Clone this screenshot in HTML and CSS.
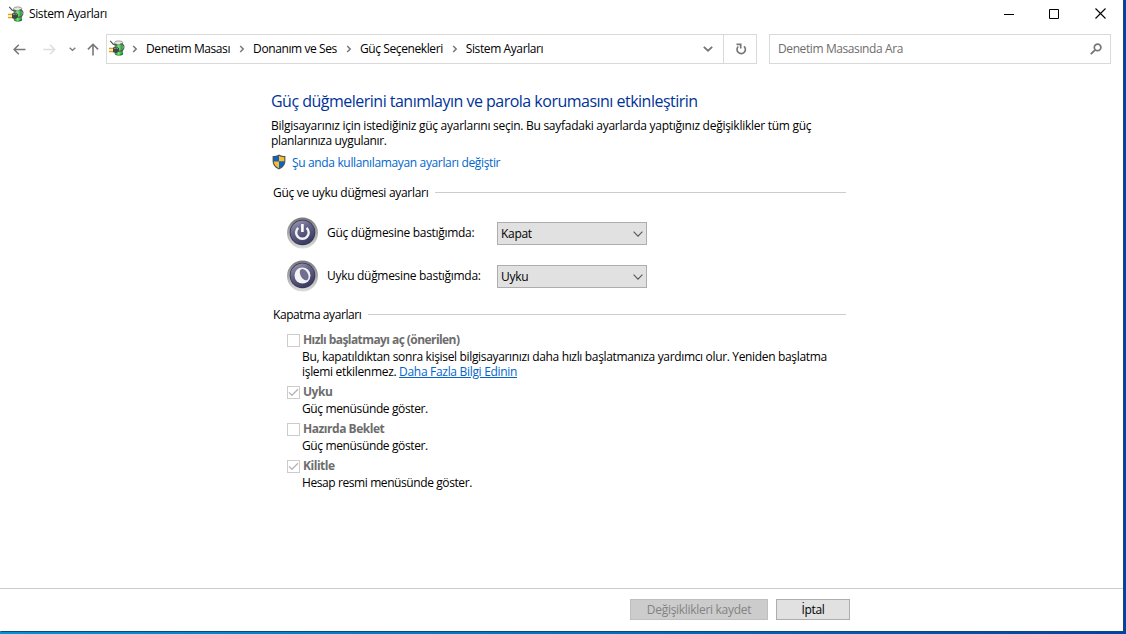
FILE: index.html
```html
<!DOCTYPE html>
<html lang="tr">
<head>
<meta charset="utf-8">
<title>Sistem Ayarları</title>
<link rel="stylesheet" href="styles.css">
</head>
<body>
<svg class="defs" width="0" height="0" aria-hidden="true">
  <defs>
    <linearGradient id="battery" x1="0" x2="1"><stop offset="0" stop-color="#2b8f38"/><stop offset=".5" stop-color="#6fe870"/><stop offset="1" stop-color="#1a8a30"/></linearGradient>
    <linearGradient id="rim" x1="0" y1="0" x2="0" y2="1"><stop offset="0" stop-color="#77777b"/><stop offset=".5" stop-color="#a9a9ad"/><stop offset="1" stop-color="#dededf"/></linearGradient>
    <linearGradient id="face" x1="0" y1="0" x2=".5" y2="1"><stop offset="0" stop-color="#a2a2b9"/><stop offset=".45" stop-color="#66668a"/><stop offset="1" stop-color="#3c3c62"/></linearGradient>
    <symbol id="power-plug" viewBox="0 0 16 16">
      <ellipse cx="10" cy="13.8" rx="4.2" ry="1.8" fill="#1d6a2a"/>
      <path d="M5.6 3h8.2v10.6q-4.1 2.6-8.2 0z" fill="url(#battery)"/>
      <ellipse cx="9.7" cy="2.8" rx="4.2" ry="1.9" fill="#e3e8e3" stroke="#777" stroke-width=".7"/>
      <path d="M1.2.8l3 3.4 3.8 1" fill="none" stroke="#555" stroke-width="1.2"/>
      <path d="M9.5 11.2c4 .2 6-2.2 5.4-5-.5-2-2-2.800-3.600-2" fill="none" stroke="#505050" stroke-width="1.1"/>
      <path d="M0 8.6h4.5M0 11.6h4.5" stroke="#e0a313" stroke-width="1.5"/>
      <path d="M4 7.6l3.6-.9 2.4 1.6v3l-2.4 1.7-3.600-.7z" fill="#444"/>
      <path d="M5 8.7l2.6-.7 1.4.9" fill="none" stroke="#8b8b8b"/>
    </symbol>
    <symbol id="crumb" viewBox="0 0 6 8"><path d="M1.2 1l3 3-3 3" fill="none" stroke="#777" stroke-width="1.5"/></symbol>
    <symbol id="select-arrow" viewBox="0 0 10 6"><path d="M.6.7L5 5.1 9.4.7" fill="none" stroke="#555" stroke-width="1.1"/></symbol>
    <symbol id="tick" viewBox="0 0 11 11"><path d="M1 5.4l2.9 2.9L10 2.2" fill="none" stroke="#b5b5b5" stroke-width="1.3"/></symbol>
  </defs>
</svg>
<div class="window">
  <header class="titlebar">
    <svg class="app-icon"><use href="#power-plug"/></svg>
    <span class="window-title">Sistem Ayarları</span>
    <div class="window-controls">
      <svg width="10" height="10"><path d="M0 5.5h10" stroke="#000"/></svg>
      <svg width="10" height="10"><path d="M.5.5h9v9h-9z" fill="none" stroke="#000"/></svg>
      <svg width="11" height="11"><path d="M.5.5l10 10M10.5.5l-10 10" stroke="#000" stroke-width="1.1"/></svg>
    </div>
  </header>
  <nav class="navbar">
    <div class="history">
      <svg width="13" height="11"><path d="M12.5 5.5H1.2M5.8.8L1.1 5.5l4.7 4.7" fill="none" stroke="#777" stroke-width="1.5"/></svg>
      <svg width="13" height="11"><path d="M.3 5.5h11.3M7 .8l4.7 4.7L7 10.2" fill="none" stroke="#ddd" stroke-width="1.5"/></svg>
      <svg width="7" height="5"><path d="M.7.8l2.8 2.6L6.3.8" fill="none" stroke="#777" stroke-width="1.4"/></svg>
      <svg width="12" height="13"><path d="M6 12.5V1.4M.9 6.4L6 1.3l5.1 5.1" fill="none" stroke="#777" stroke-width="1.6"/></svg>
    </div>
    <div class="address">
      <svg class="address-icon"><use href="#power-plug"/></svg>
      <svg class="sep"><use href="#crumb"/></svg><span class="crumb">Denetim Masası</span>
      <svg class="sep"><use href="#crumb"/></svg><span class="crumb">Donanım ve Ses</span>
      <svg class="sep"><use href="#crumb"/></svg><span class="crumb">Güç Seçenekleri</span>
      <svg class="sep"><use href="#crumb"/></svg><span class="crumb">Sistem Ayarları</span>
      <svg class="drop" width="10" height="6"><path d="M.8.8L5 4.7 9.2.8" fill="none" stroke="#777" stroke-width="1.8"/></svg>
      <div class="refresh"><svg width="12" height="12"><path d="M9 3.3A4.2 4.2 0 1 1 3.2 3.5" fill="none" stroke="#777" stroke-width="1.7"/><path d="M1.5 1.3h4.2v4.2" fill="none" stroke="#777" stroke-width="1.7"/></svg></div>
    </div>
    <div class="search">
      <span class="crumb">Denetim Masasında Ara</span>
      <svg width="12" height="12"><circle cx="7.6" cy="4.4" r="3.3" fill="none" stroke="#777" stroke-width="1.7"/><path d="M5.2 6.8L.8 11.2" stroke="#777" stroke-width="1.9"/></svg>
    </div>
  </nav>
  <main class="content">
    <h1>Güç düğmelerini tanımlayın ve parola korumasını etkinleştirin</h1>
    <p class="intro"><span class="i1">Bilgisayarınız için istediğiniz güç ayarlarını seçin. Bu sayfadaki ayarlarda yaptığınız değişiklikler tüm güç</span><br><span class="i2">planlarınıza uygulanır.</span></p>
    <a class="admin-link">
      <svg width="14" height="16" viewBox="0 0 14 16"><path d="M7 .5C5 1.8 3 2.1.6 2.1v4.6C.6 11 3.2 13.8 7 15.5c3.8-1.7 6.4-4.5 6.4-8.8V2.1C11 2.1 9 1.8 7 .5z" fill="#48525a"/><path d="M7 1.8C5.3 2.8 3.8 3.1 1.7 3.2V7.5H7z" fill="#0a63c6"/><path d="M7 1.8c1.7 1 3.2 1.3 5.3 1.4V7.5H7z" fill="#fcbd2d"/><path d="M1.7 7.5C2 10.8 4 12.9 7 14.3V7.5z" fill="#fcbd2d"/><path d="M12.3 7.5C12 10.8 10 12.9 7 14.3V7.5z" fill="#0a63c6"/></svg>
      <span>Şu anda kullanılamayan ayarları değiştir</span>
    </a>
    <h2 class="group"><span>Güç ve uyku düğmesi ayarları</span></h2>
    <div class="button-row">
      <svg width="32" height="32" viewBox="0 0 32 32"><circle cx="15.5" cy="16" r="15.5" fill="url(#rim)"/><circle cx="15.5" cy="15.5" r="12.8" fill="#33334f"/><circle cx="15.5" cy="15.5" r="12" fill="url(#face)"/><path d="M11.2 10.8a6.3 6.3 0 1 0 8.4 0" fill="none" stroke="#f3f3f7" stroke-width="2.4"/><path d="M15.4 7v8" stroke="#fff" stroke-width="2.6"/></svg>
      <label>Güç düğmesine bastığımda:</label>
      <div class="select"><span>Kapat</span><svg><use href="#select-arrow"/></svg></div>
    </div>
    <div class="button-row">
      <svg width="32" height="32" viewBox="0 0 32 32"><circle cx="15.5" cy="16" r="15.5" fill="url(#rim)"/><circle cx="15.5" cy="15.5" r="12.8" fill="#33334f"/><circle cx="15.5" cy="15.5" r="12" fill="url(#face)"/><circle cx="15.5" cy="15.5" r="8" fill="#f3f3f7"/><ellipse cx="17.2" cy="14.6" rx="3.7" ry="6.2" transform="rotate(-30 17.2 14.6)" fill="#70708e"/></svg>
      <label>Uyku düğmesine bastığımda:</label>
      <div class="select"><span>Uyku</span><svg><use href="#select-arrow"/></svg></div>
    </div>
    <h2 class="group shutdown"><span>Kapatma ayarları</span></h2>
    <div class="option">
      <div class="option-head"><i class="box"></i><b class="long">Hızlı başlatmayı aç (önerilen)</b></div>
      <p><span class="d1">Bu, kapatıldıktan sonra kişisel bilgisayarınızı daha hızlı başlatmanıza yardımcı olur. Yeniden başlatma</span><br><span class="d2">işlemi etkilenmez. <a>Daha Fazla Bilgi Edinin</a></span></p>
    </div>
    <div class="option">
      <div class="option-head"><i class="box"><svg><use href="#tick"/></svg></i><b>Uyku</b></div>
      <p><span class="d3">Güç menüsünde göster.</span></p>
    </div>
    <div class="option">
      <div class="option-head"><i class="box"></i><b>Hazırda Beklet</b></div>
      <p><span class="d3">Güç menüsünde göster.</span></p>
    </div>
    <div class="option">
      <div class="option-head"><i class="box"><svg><use href="#tick"/></svg></i><b>Kilitle</b></div>
      <p><span class="d4">Hesap resmi menüsünde göster.</span></p>
    </div>
  </main>
  <footer class="footer">
    <div class="button">Değişiklikleri kaydet</div>
    <div class="button cancel">İptal</div>
  </footer>
</div>
</body>
</html>
```
FILE: styles.css
```css
* { box-sizing: border-box; }
body {
  margin: 0;
  width: 1126px;
  height: 634px;
  overflow: hidden;
  padding: 0 3px 3px 0;
  background: linear-gradient(90deg, #0093d6, #0070bd 55%, #0042a8);
  font: 12px/15px "Open Sans", "Noto Sans", sans-serif;
  letter-spacing: -0.3px;
  color: #000;
  white-space: nowrap;
}
svg { display: block; flex: none; }
.defs { position: absolute; }
h1, h2, p { margin: 0; font-weight: 400; }
.window {
  display: flex;
  flex-direction: column;
  width: 1123px;
  height: 631px;
  background: #fff;
  box-shadow: 1px 1px 0 #124878;
}
.titlebar { display: flex; align-items: center; height: 27px; padding: 0 17px 0 8px; }
.app-icon, .address-icon { width: 16px; height: 16px; }
.window-title { margin-left: 5px; letter-spacing: -0.37px; }
.window-controls { display: flex; align-items: center; gap: 35px; margin-left: auto; }
.window-controls svg:last-child { margin-left: 1px; }
.navbar { display: flex; align-items: center; height: 43px; padding: 1px 12px 0 13px; }
.history { display: flex; align-items: center; width: 93px; }
.history svg:nth-child(2) { margin-left: 17px; }
.history svg:nth-child(3) { margin-left: 13px; }
.history svg:nth-child(4) { margin-left: 11px; }
.address { display: flex; align-items: center; width: 651px; height: 30px; border: 1px solid #d9d9d9; padding-left: 2px; }
.address-icon { margin-bottom: 2px; }
.crumb { padding-bottom: 1px; letter-spacing: -0.4px; }
.sep { width: 6px; height: 8px; margin: 0 8px 0 9px; }
.address-icon + .sep { margin-left: 7px; }
.drop { margin-left: auto; margin-right: 10px; }
.refresh { display: flex; align-items: center; justify-content: center; width: 33px; height: 28px; padding-left: 2px; border-left: 1px solid #d9d9d9; }
.search { display: flex; align-items: center; justify-content: space-between; width: 342px; height: 30px; margin-left: 12px; padding: 0 8px; border: 1px solid #d9d9d9; color: #6d6d6d; }
.content { flex: 1; width: 575px; margin-left: 271px; padding-top: 20px; }
h1 { font-size: 16px; line-height: 22px; color: #003399; letter-spacing: -0.51px; }
.intro { margin-top: 6px; }
.i1 { letter-spacing: -0.27px; }
.i2 { letter-spacing: -0.33px; }
.admin-link { display: flex; align-items: center; gap: 6px; height: 16px; margin: 6px 0 0 1px; color: #0066cc; letter-spacing: -0.35px; }
.group { display: flex; align-items: center; height: 16px; margin: 14px 0 0 2px; font-size: 12px; }
.group::after { content: ""; flex: 1; height: 1px; margin-left: 7px; background: #ccc; }
.button-row { display: flex; align-items: center; height: 32px; margin: 0 0 11px 16px; }
.group + .button-row { margin-top: 17px; }
.button-row label { width: 170px; margin-left: 8px; padding-bottom: 1px; }
.select { display: flex; align-items: center; justify-content: space-between; width: 150px; height: 23px; margin-top: 1px; padding: 0 3px; background: #e1e1e1; border: 1px solid #adadad; }
.select svg { width: 10px; height: 6px; }
.shutdown { margin-top: 14px; margin-bottom: 10px; letter-spacing: -0.42px; }
.option { margin-left: 16px; }
.option-head { display: flex; align-items: center; height: 17px; }
.option p { margin-left: 15px; padding-bottom: 5px; }
.option b { margin-left: 3px; padding-bottom: 2px; color: #6d6d6d; letter-spacing: -0.47px; }
.option .long { letter-spacing: -0.57px; }
.d1 { letter-spacing: -0.34px; }
.d2 { letter-spacing: -0.31px; }
.d3 { letter-spacing: -0.37px; }
.d4 { letter-spacing: -0.41px; }
.option a { color: #0066cc; text-decoration: underline; }
.box { width: 13px; height: 13px; border: 1px solid #ccc; }
.box svg { width: 11px; height: 11px; }
.footer { display: flex; gap: 8px; height: 43px; padding: 10px 0 0 630px; border-top: 1px solid #ccc; }
.button { display: flex; align-items: center; justify-content: center; height: 21px; width: 138px; border: 1px solid #bfbfbf; background: #ccc; color: #838383; }
.cancel { width: 74px; border-color: #adadad; background: #e1e1e1; color: #000; }
```
